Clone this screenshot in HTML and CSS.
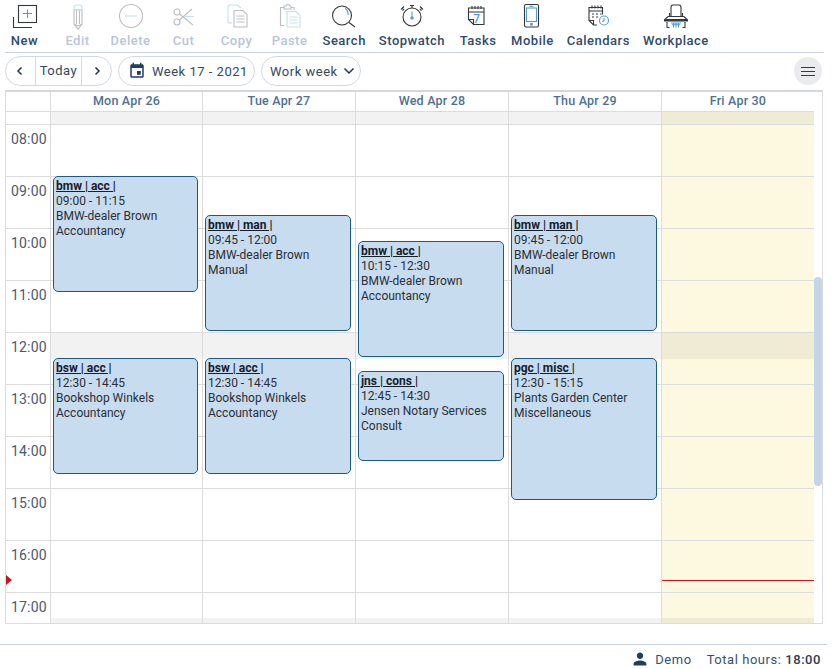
FILE: index.html
```html
<!DOCTYPE html>
<html lang="en">
<head>
<meta charset="utf-8">
<title>Calendar</title>
<link rel="stylesheet" href="styles.css">
</head>
<body>
<div class="app">
  <div class="toolbar-wrap">
    <div class="toolbar">
      <div class="tool"><svg viewBox="0 0 32 30" class="ico"><rect class="d" x="9.500" y="3.500" width="18" height="17"/><path class="d" d="M4.500 15V25.500H23"/><path class="b" d="M18.500 7.500v8.500M14 11.500h9"/></svg><span>New</span></div>
      <div class="tool off"><svg viewBox="0 0 32 30" class="ico"><path class="d" d="M12 8V22L16 27L20 22V8ZM14.500 9V22M17.500 9V22M12 22L16 24L20 22"/><path class="b" d="M12 8V5.500Q12 3 14 3H18Q20 3 20 5.500V8Z"/></svg><span>Edit</span></div>
      <div class="tool off"><svg viewBox="0 0 32 30" class="ico"><circle class="d" cx="16" cy="14" r="11.500"/><path class="b" d="M10 14H22"/></svg><span>Delete</span></div>
      <div class="tool off"><svg viewBox="0 0 32 30" class="ico"><circle class="d" cx="9" cy="10" r="3"/><circle class="d" cx="9" cy="20" r="3"/><path class="d" d="M11.500 12L25 23M11.500 18L24 7"/><path class="b" d="M17 14.500H26"/></svg><span>Cut</span></div>
      <div class="tool off"><svg viewBox="0 0 32 30" class="ico"><path class="b" d="M11 21H9Q7 21 7 19V5Q7 3 9 3H16L20 6"/><path class="d" d="M13 8.500H22L26 12.500V25H13ZM15.500 14h8M15.500 17h8M15.500 20h8"/></svg><span>Copy</span></div>
      <div class="tool off"><svg viewBox="0 0 32 30" class="ico"><path class="d" d="M10 23.500H6.500V5.500H10M17 5.500H20V8M10 4H12Q13 2 14 2Q15 2 16 4H17V7H10Z"/><path class="b" d="M13 9.500H22L26 13.500V25H13ZM15.500 15h8M15.500 18h8M15.500 21h8"/></svg><span>Paste</span></div>
      <div class="tool"><svg viewBox="0 0 32 30" class="ico"><circle class="d" cx="14" cy="13.500" r="9.500"/><path class="d" d="M21 20.500L27 25"/><path class="b" d="M17 6.500Q20.500 8.500 20 13"/></svg><span>Search</span></div>
      <div class="tool"><svg viewBox="0 0 32 30" class="ico"><circle class="d" cx="16" cy="15" r="9"/><path class="d" d="M14 3.500H18M16 3.500V6M8 4.500L5 7.500M24 4.500L27 7.500M8 7L6.500 8.500M24 7L25.500 8.500"/><path class="b" d="M16 9.500V15"/><circle class="bf" cx="16" cy="16" r="1.700"/></svg><span>Stopwatch</span></div>
      <div class="tool"><svg viewBox="0 0 32 30" class="ico"><path class="d" d="M6.500 6H22V22.500H11.500L6.500 17.500ZM6.500 17.500H11.500V22.500M6.500 10H22M10 4V7M13 4V7M16 4V7M19 4V7"/><text x="15" y="20.500" class="seven">7</text></svg><span>Tasks</span></div>
      <div class="tool"><svg viewBox="0 0 32 30" class="ico"><rect class="d" x="8.500" y="2.500" width="14" height="22.500" rx="1.500"/><rect class="b" x="10.500" y="6" width="10" height="13.500"/><path class="b" d="M13.500 4.300h4"/><rect class="bf" x="14.200" y="21" width="2.600" height="2.600"/></svg><span>Mobile</span></div>
      <div class="tool"><svg viewBox="0 0 32 30" class="ico"><path class="d" d="M7 8V5.500H20.500V12.500M15 23H11.500L7 18.500V8M7 9H20.500M7 18.500H11.500V23M10 3.500V6.500M13 3.500V6.500M16 3.500V6.500M19 3.500V6.500M10 12h2M14 12h2M18 12h1.500M10 15h2M14 15h2"/><circle class="b" cx="22" cy="18.500" r="4.500"/><path class="b" d="M22 16V18.500L20.300 19.800"/></svg><span>Calendars</span></div>
      <div class="tool"><svg viewBox="0 0 32 30" class="ico"><path class="d" d="M11 14V5.500Q11 3 13 3H19Q21 3 21 5.500V14M8 14.500L5 17.500H27L24 14.500H8M9.500 11V14.500M22.500 11V14.500"/><path class="df" d="M4 17.500H28V19.500H4Z"/><path class="d" d="M7 20V25.500H9.500M25 20V25.500H22.500"/><path class="b" d="M11 21H21M12 22.700H20M13.500 21V25.500M16 21V25.500M18.500 21V25.500"/></svg><span>Workplace</span></div>
    </div>
  </div>

  <div class="nav">
    <div class="pill group">
      <div class="cell"><svg viewBox="0 0 10 10" class="chev"><path d="M6.500 1.500L3 5L6.500 8.500"/></svg></div>
      <div class="cell today">Today</div>
      <div class="cell"><svg viewBox="0 0 10 10" class="chev"><path d="M3.500 1.500L7 5L3.500 8.500"/></svg></div>
    </div>
    <div class="pill week">
      <svg viewBox="0 0 24 24" class="cal"><path d="M17 12h-5v5h5v-5zM16 1v2H8V1H6v2H5c-1.100 0-2 .9-2 2v14c0 1.100.9 2 2 2h14c1.100 0 2-.9 2-2V5c0-1.100-.9-2-2-2h-1V1h-2zm3 18H5V8h14v11z"/></svg>
      <span>Week 17 - 2021</span>
    </div>
    <div class="pill mode">
      <span>Work week</span>
      <svg viewBox="0 0 12 12" class="down"><path d="M1.500 3.500L6 8L10.500 3.500"/></svg>
    </div>
    <div class="menu"><i></i><i></i><i></i></div>
  </div>

  <div class="calendar">
    <div class="head">
      <div class="hc"></div>
      <div class="hc">Mon Apr 26</div>
      <div class="hc">Tue Apr 27</div>
      <div class="hc">Wed Apr 28</div>
      <div class="hc">Thu Apr 29</div>
      <div class="hc last">Fri Apr 30</div>
    </div>
    <div class="body">
      <div class="times">
        <div class="slot early"></div>
        <div class="slot t">08:00</div>
        <div class="slot t">09:00</div>
        <div class="slot t">10:00</div>
        <div class="slot t">11:00</div>
        <div class="slot t">12:00</div>
        <div class="slot t">13:00</div>
        <div class="slot t">14:00</div>
        <div class="slot t">15:00</div>
        <div class="slot t">16:00</div>
        <div class="slot end t">17:00</div>
      </div>

      <div class="day first">
        <div class="slot early shade"></div><div class="slot"></div><div class="slot"></div><div class="slot"></div><div class="slot"></div><div class="slot lunch"><b></b></div><div class="slot"></div><div class="slot"></div><div class="slot"></div><div class="slot"></div><div class="slot end"><b></b></div>
        <div class="event" style="top:64px;height:116px"><u>bmw | acc |</u><br>09:00 - 11:15<br>BMW-dealer Brown<br>Accountancy</div>
        <div class="event" style="top:246px;height:116px"><u>bsw | acc |</u><br>12:30 - 14:45<br>Bookshop Winkels<br>Accountancy</div>
      </div>

      <div class="day">
        <div class="slot early shade"></div><div class="slot"></div><div class="slot"></div><div class="slot"></div><div class="slot"></div><div class="slot lunch"><b></b></div><div class="slot"></div><div class="slot"></div><div class="slot"></div><div class="slot"></div><div class="slot end"><b></b></div>
        <div class="event" style="top:103px;height:116px"><u>bmw | man |</u><br>09:45 - 12:00<br>BMW-dealer Brown<br>Manual</div>
        <div class="event" style="top:246px;height:116px"><u>bsw | acc |</u><br>12:30 - 14:45<br>Bookshop Winkels<br>Accountancy</div>
      </div>

      <div class="day">
        <div class="slot early shade"></div><div class="slot"></div><div class="slot"></div><div class="slot"></div><div class="slot"></div><div class="slot lunch"><b></b></div><div class="slot"></div><div class="slot"></div><div class="slot"></div><div class="slot"></div><div class="slot end"><b></b></div>
        <div class="event" style="top:129px;height:116px"><u>bmw | acc |</u><br>10:15 - 12:30<br>BMW-dealer Brown<br>Accountancy</div>
        <div class="event" style="top:259px;height:90px"><u>jns | cons |</u><br>12:45 - 14:30<br>Jensen Notary Services<br>Consult</div>
      </div>

      <div class="day">
        <div class="slot early shade"></div><div class="slot"></div><div class="slot"></div><div class="slot"></div><div class="slot"></div><div class="slot lunch"><b></b></div><div class="slot"></div><div class="slot"></div><div class="slot"></div><div class="slot"></div><div class="slot end"><b></b></div>
        <div class="event" style="top:103px;height:116px"><u>bmw | man |</u><br>09:45 - 12:00<br>BMW-dealer Brown<br>Manual</div>
        <div class="event" style="top:246px;height:142px"><u>pgc | misc |</u><br>12:30 - 15:15<br>Plants Garden Center<br>Miscellaneous</div>
      </div>

      <div class="day today-col">
        <div class="slot early shade"></div><div class="slot"></div><div class="slot"></div><div class="slot"></div><div class="slot"></div><div class="slot lunch"><b></b></div><div class="slot"></div><div class="slot"></div><div class="slot"></div><div class="slot"></div><div class="slot end"><b></b></div>
        <div class="now"></div>
      </div>

      <div class="gutter"><div class="thumb"></div></div>
      <div class="marker"></div>
    </div>
  </div>

  <div class="footer">
    <svg viewBox="0 0 24 24" class="person"><path d="M12 12c2.700 0 4.800-2.200 4.800-4.800S14.700 2.400 12 2.400 7.200 4.500 7.200 7.200 9.300 12 12 12zm0 2.400c-3.200 0-9.600 1.600-9.600 4.800v2.400h19.200v-2.400c0-3.200-6.400-4.800-9.600-4.800z"/></svg>
    <span class="user">Demo</span>
    <span class="total">Total hours: <strong>18:00</strong></span>
  </div>
</div>
</body>
</html>
```

FILE: styles.css
```css
* { box-sizing: border-box; }
html, body { margin: 0; padding: 0; background: #fff; }
body { font-family: Roboto, "Liberation Sans", sans-serif; color: #2c3e50; overflow: hidden; }
.app { width: 836px; height: 669px; display: flex; flex-direction: column; overflow: hidden; }

.toolbar-wrap { height: 53px; margin: 0 12px 0 5px; border-bottom: 1px solid #ccd4e0; }
.toolbar { display: flex; margin-left: -7px; }
.tool { min-width: 53px; padding: 0 6.500px; display: flex; flex-direction: column; align-items: center; color: #2f4a6b; font-size: 13px; font-weight: 500; letter-spacing: .5px; line-height: 16px; white-space: nowrap; }
.tool span { margin-top: 1px; }
.ico { width: 32px; height: 30px; margin-top: 2px; display: block; }
.ico .d, .ico .b { fill: none; stroke-width: 1.100; }
.ico .d { stroke: #33383d; }
.ico .b { stroke: #4f9fd4; }
.ico .bf { fill: #4f9fd4; }
.ico .df { fill: #33383d; }
.seven { fill: #4f9fd4; font: 500 12px Roboto, sans-serif; text-anchor: middle; }
.tool.off { color: #b8c6d8; }
.tool.off .ico { opacity: .32; }

.nav { height: 37px; padding: 3px 14px 0 5px; display: flex; align-items: flex-start; gap: 6px; font-size: 13px; letter-spacing: .5px; color: #33475e; }
.pill { height: 30px; border: 1px solid #d5d9de; border-radius: 15px; display: flex; align-items: center; }
.group { width: 107px; }
.cell { height: 100%; width: 29px; display: flex; align-items: center; justify-content: center; }
.cell.today { width: 48px; border-left: 1px solid #d5d9de; border-right: 1px solid #d5d9de; padding-bottom: 2px; }
.chev { width: 10px; height: 10px; fill: none; stroke: #1f3550; stroke-width: 1.500; }
.week { width: 137px; padding-left: 9px; gap: 6px; }
.cal { width: 18px; height: 18px; fill: #1f3f5f; }
.mode { width: 100px; padding-left: 8px; gap: 5px; }
.down { width: 12px; height: 12px; fill: none; stroke: #1f3550; stroke-width: 1.500; }
.menu { width: 28px; height: 28px; margin: 1px 0 0 auto; border-radius: 50%; background: #e9ebee; display: flex; flex-direction: column; align-items: center; justify-content: center; gap: 3px; }
.menu i { display: block; width: 14px; height: 1px; background: #1f3f5f; }

.calendar { width: 818px; height: 534px; margin-left: 5px; border: 1px solid #d9dce0; border-top: 2px solid #d4d8de; }
.head { display: grid; grid-template-columns: 45px 152px 153px 153px 153px 152px; height: 21px; margin-top: -1px; }
.hc { border-right: 1px solid #dcdcdc; border-bottom: 1px solid #dcdcdc; font-size: 12.500px; font-weight: 500; letter-spacing: .2px; color: #4f7191; text-align: center; line-height: 19px; }
.hc.last { border-right: 0; }
.body { position: relative; display: grid; grid-template-columns: 45px 152px 153px 153px 153px 152px 8px; height: 511px; }
.times, .day { position: relative; border-right: 1px solid #dcdcdc; }
.today-col { border-right: 0; background: #fdf8e0; }
.slot { position: relative; height: 52px; border-bottom: 1px solid #dcdcdc; }
.slot.early { height: 13px; }
.slot.shade { background: rgba(0, 0, 0, .05); }
.slot.end { height: 30px; border-bottom: 0; }
.slot b { position: absolute; left: 0; right: 0; background: rgba(0, 0, 0, .05); }
.slot.lunch b { top: 0; height: 26px; }
.slot.end b { bottom: 0; height: 5px; }
.t { font-size: 14px; letter-spacing: .25px; color: #4a5a6c; text-align: right; padding: 6px 3px 0 0; line-height: 17px; }
.event { position: absolute; left: 2px; width: 146px; padding: 2px 2px; border: 1px solid #1c5a84; border-radius: 5px; background: #c8dcef; font-size: 12px; line-height: 15px; color: #2a2f36; z-index: 1; white-space: nowrap; }
.first .event { width: 145px; }
.event u { font-weight: 700; color: #15202b; }
.now { position: absolute; left: 0; right: 0; top: 468px; height: 1px; background: #c8141a; }
.gutter { position: relative; }
.thumb { position: absolute; left: 0; top: 165px; width: 8px; height: 209px; border-radius: 4px; background: #c5d5e8; }
.marker { position: absolute; left: 0; top: 463px; width: 0; height: 0; border-top: 5px solid transparent; border-bottom: 5px solid transparent; border-left: 6px solid #c8141a; }

.footer { width: 827px; height: 25px; margin-top: 20px; border-top: 1px solid #ccd4e0; display: flex; align-items: center; justify-content: flex-end; padding: 4px 6px 0 0; font-size: 13px; letter-spacing: .55px; color: #3c5068; }
.person { width: 16px; height: 16px; fill: #1f3f5f; margin-right: 7px; }
.user { margin-right: 15px; }
.total strong { font-weight: 500; color: #2a3d55; }
```
